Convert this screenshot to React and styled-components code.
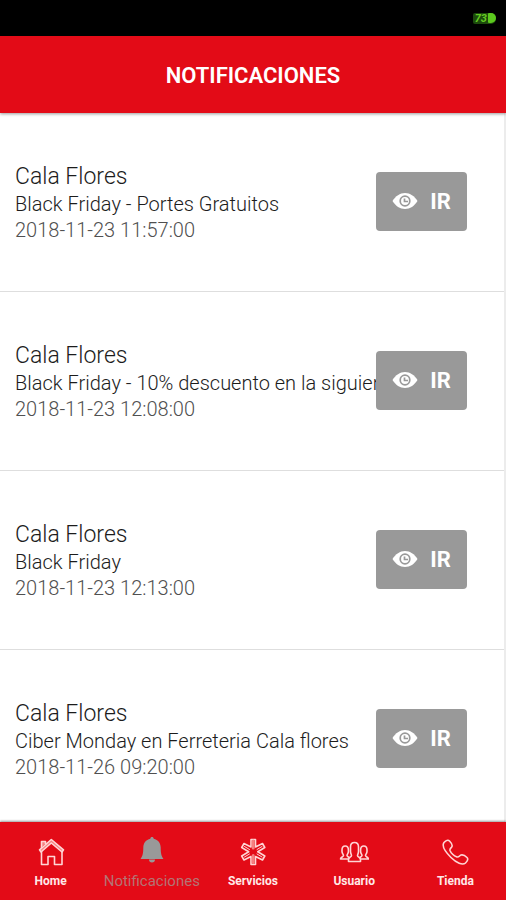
import React from 'react';
import styled, { createGlobalStyle } from 'styled-components';

const GlobalStyle = createGlobalStyle`
    * {
        box-sizing: border-box;
    }
    body {
        margin: 0;
        background: #ffffff;
        font-family: 'Roboto', 'Liberation Sans', sans-serif;
    }
`;

const Screen = styled.div`
    display: flex;
    flex-direction: column;
    height: 100vh;
    overflow: hidden;
`;

const StatusBar = styled.div`
    display: flex;
    flex-shrink: 0;
    align-items: center;
    justify-content: flex-end;
    height: 36px;
    padding: 0 10px;
    background: #000000;
`;

const Battery = styled.div`
    display: flex;
    align-items: center;
    gap: 1px;
    height: 11px;
    padding-left: 2px;
    border-radius: 2px 5px 5px 2px;
    background: #1c4a0c;
    color: #66cc22;
    font-size: 11px;
    line-height: 11px;
    font-weight: 700;
    font-style: italic;

    &::after {
        content: '';
        width: 8px;
        height: 10px;
        border-radius: 1px 5px 5px 1px;
        background: #5cc81e;
    }
`;

const Header = styled.header`
    display: flex;
    flex-shrink: 0;
    align-items: center;
    justify-content: center;
    height: 77px;
    padding-top: 2px;
    background: #e30b17;
    box-shadow: 0 1px 3px rgba(0, 0, 0, 0.4);
    z-index: 1;
`;

const Title = styled.h1`
    margin: 0;
    color: #ffffff;
    font-size: 22px;
    font-weight: 600;
`;

const List = styled.ul`
    flex: 1;
    min-height: 0;
    margin: 0;
    padding: 0;
    overflow: hidden;
    list-style: none;
    border-right: 2px solid #ececec;
`;

const Row = styled.li`
    display: flex;
    align-items: center;
    height: 179px;
    padding: 0 37px 2px 15px;
    border-bottom: 1px solid #dedede;
`;

const Info = styled.div`
    flex: 1;
    min-width: 0;
    padding-top: 4px;
    overflow: hidden;
    white-space: nowrap;
`;

const Name = styled.h2`
    margin: 0;
    color: #1c1c1c;
    font-size: 23px;
    line-height: 28px;
    font-weight: 300;
`;

const Message = styled.p`
    margin: 0;
    color: #1c1c1c;
    font-size: 20px;
    line-height: 26px;
    font-weight: 300;
`;

const DateText = styled.time`
    display: block;
    color: #505050;
    font-size: 20px;
    line-height: 26px;
    font-weight: 300;
`;

const GoButton = styled.button`
    display: flex;
    flex-shrink: 0;
    align-items: center;
    justify-content: center;
    gap: 12px;
    width: 91px;
    height: 59px;
    padding: 0;
    border: 0;
    border-radius: 4px;
    background: #999999;
    color: #ffffff;
    font-family: inherit;
    font-size: 22px;
    font-weight: 700;
`;

const TabBar = styled.nav`
    display: grid;
    flex-shrink: 0;
    grid-template-columns: repeat(5, 1fr);
    height: 78px;
    background: #e30b17;
    box-shadow: 0 -1px 2px rgba(0, 0, 0, 0.4);
    z-index: 1;
`;

const Tab = styled.a`
    display: flex;
    flex-direction: column;
    align-items: center;
    gap: 6px;
    padding-top: 15px;
    color: ${({ $active }) => ($active ? '#b47474' : '#ffe8e8')};
    font-size: ${({ $active }) => ($active ? '15px' : '12px')};
    font-weight: ${({ $active }) => ($active ? 400 : 700)};
    line-height: 16px;
    text-decoration: none;
`;

const TabIcon = styled.svg`
    width: 30px;
    height: 30px;
    fill: none;
    stroke: #ffd5d5;
    stroke-width: 1.6;
    stroke-linejoin: round;
    stroke-linecap: round;
`;

const EyeIcon = () => (
    <svg width="26" height="18" viewBox="0 0 26 18" aria-hidden="true">
        <path d="M0.5 9C3.5 4 8 1 13 1s9.500 3 12.500 8C22.500 14 18 17 13 17S3.500 14 0.500 9z" fill="#fff" />
        <circle cx="13" cy="9" r="4.800" fill="none" stroke="#999" strokeWidth="1.700" />
        <path d="M12.500 6.500v3h3.500" fill="none" stroke="#999" strokeWidth="1.700" />
    </svg>
);

const HomeIcon = () => (
    <TabIcon viewBox="0 0 30 30" aria-hidden="true">
        <path d="M5.500 14v13.500h6.500v-8h6.500v8H26V14" />
        <path d="M3.500 12.800L15.300 2.500L27.500 12.800L26 15L15.300 6L5 15z" fill="#f58080" />
        <path d="M5.500 10.500V4.500h4v2.500" fill="#f58080" />
    </TabIcon>
);

const BellIcon = () => (
    <TabIcon viewBox="0 0 30 30" aria-hidden="true">
        <path
            d="M15 -1c1 0 1.600 0.700 1.700 1.700c4.300 1 7 4.300 7 8.800c0 6 0.800 8.500 2.800 11.500H3.500c2-3 2.800-5.500 2.800-11.500c0-4.500 2.700-7.800 7-8.800c0.100-1 0.700-1.700 1.700-1.700zM12 21.500h6c0 2-1.200 3-3 3s-3-1-3-3z"
            transform="translate(0 1)"
            fill="#999"
            stroke="none"
        />
    </TabIcon>
);

const ServicesIcon = () => (
    <TabIcon viewBox="0 0 30 30" aria-hidden="true">
        <path
            d="M13 2.500h4.500v7.500l7-3.500l2.300 4l-7 4.300l7 4.200l-2.300 4l-7-3.500v8H13V19.500l-7 3.500l-2.300-4l7-4.200l-7-4.300l2.300-4l7 3.500z"
        />
        <path d="M15.200 4v7M15.200 18.500v7" stroke="#f58080" strokeWidth="3" />
        <path d="M6.500 9.500l5 3M19 17l5 3M6.500 20l5-3M19 12.500l5-3" strokeWidth="1" />
    </TabIcon>
);

const UsersIcon = () => (
    <TabIcon viewBox="0 0 30 30" aria-hidden="true">
        <path d="M9.500 24.500h12v-2c0-2-3-2.500-3-4c0-1 1-2 1-4V10c0-3-1.500-4.500-4-4.500s-4 1.500-4 4.500v4.500c0 2 1 3 1 4c0 1.500-3 2-3 4z" />
        <path d="M9.500 22H1.500c0-2 3-2 3-3.500c0-1-1.500-2-1.500-4v-1.500c0-2.500 1.300-4 3.200-4s3.200 1.500 3.200 4v1.500c0 2-1.400 3-1.400 4c0 0.800 1 1.200 1.800 1.700" />
        <path d="M21.500 22h8c0-2-3-2-3-3.500c0-1 1.500-2 1.500-4v-1.500c0-2.500-1.300-4-3.200-4s-3.200 1.500-3.200 4v1.500c0 2 1.400 3 1.400 4c0 0.800-1 1.200-1.800 1.700" />
    </TabIcon>
);

const PhoneIcon = () => (
    <TabIcon viewBox="0 0 30 30" aria-hidden="true">
        <path d="M4 5.500C6 3.500 8 2.500 9.500 4c1.500 1.500 3 4 2.500 5.500c-0.500 1.500-2.500 2-2 4c1 2.500 4.500 5.500 7 6.500c2 0.500 2.500-1.500 4-2c2-0.500 4.500 1 6 2.500c1.500 1.500 0 4-1.500 5.500c-3 2.500-9 0-14.500-5.500S1.500 9 4 5.500z" />
    </TabIcon>
);

const notifications = [
    { message: 'Black Friday - Portes Gratuitos', date: '2018-11-23 11:57:00' },
    { message: 'Black Friday - 10% descuento en la siguiente', date: '2018-11-23 12:08:00' },
    { message: 'Black Friday', date: '2018-11-23 12:13:00' },
    { message: 'Ciber Monday en Ferreteria Cala flores', date: '2018-11-26 09:20:00' },
];

const tabs = [
    { label: 'Home', Icon: HomeIcon },
    { label: 'Notificaciones', Icon: BellIcon, active: true },
    { label: 'Servicios', Icon: ServicesIcon },
    { label: 'Usuario', Icon: UsersIcon },
    { label: 'Tienda', Icon: PhoneIcon },
];

function NotificationRow({ message, date }) {
    return (
        <Row>
            <Info>
                <Name>Cala Flores</Name>
                <Message>{message}</Message>
                <DateText>{date}</DateText>
            </Info>
            <GoButton type="button"><EyeIcon />IR</GoButton>
        </Row>
    );
}

function App() {
    return (
        <Screen>
            <GlobalStyle />
            <StatusBar><Battery>73</Battery></StatusBar>
            <Header><Title>NOTIFICACIONES</Title></Header>
            <List>
                {notifications.map((item) => (
                    <NotificationRow key={item.date} {...item} />
                ))}
            </List>
            <TabBar>
                {tabs.map(({ label, Icon, active }) => (
                    <Tab key={label} href="#" $active={active} aria-current={active ? 'page' : undefined}>
                        <Icon />
                        {label}
                    </Tab>
                ))}
            </TabBar>
        </Screen>
    );
}

export default App;
